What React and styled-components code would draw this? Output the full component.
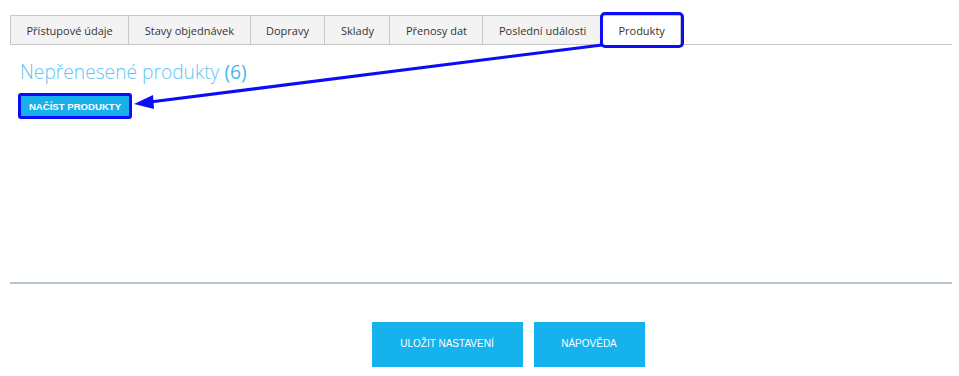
import React from 'react';
import styled, { createGlobalStyle } from 'styled-components';

const GlobalStyle = createGlobalStyle`
  html, body {
    margin: 0;
    padding: 0;
    background: #fff;
  }
  body {
    font-family: 'Open Sans', 'Liberation Sans', sans-serif;
  }
`;

const Page = styled.div`
  position: relative;
  width: 959px;
  height: 376px;
  padding: 15px 7px 0 10px;
  box-sizing: border-box;
`;

const TabBar = styled.div`
  display: flex;
  height: 30px;
  border-bottom: 1px solid #c8c8c8;
  box-sizing: border-box;
`;

const Tab = styled.div`
  display: flex;
  align-items: center;
  padding: 0 15.5px;
  height: 30px;
  box-sizing: border-box;
  border: 1px solid #c8c8c8;
  border-left-width: ${(p) => (p.$first ? '1px' : '0')};
  background: ${(p) => (p.$active ? '#fff' : '#f3f3f3')};
  border-bottom-color: ${(p) => (p.$active ? '#fff' : '#c8c8c8')};
  font-size: 11px;
  color: #333;
  white-space: nowrap;
  outline: ${(p) => (p.$active ? '3px solid #0c0cf6' : 'none')};
  outline-offset: 0;
  border-radius: ${(p) => (p.$active ? '2px' : '0')};
`;

const Panel = styled.div`
  height: 239px;
  padding: 15px 0 0 10px;
  box-sizing: border-box;
  border-bottom: 2px solid #b3c6d2;
`;

const Title = styled.h2`
  margin: 0;
  font-size: 19.2px;
  line-height: 24px;
  font-weight: 300;
  color: #62c4f1;
`;

const Count = styled.span`
  font-weight: 400;
  color: #45b8ee;
`;

const LoadButton = styled.button`
  margin-top: 9px;
  margin-left: -2px;
  display: block;
  width: 114px;
  height: 26px;
  padding: 0;
  border: 3px solid #0c0cf6;
  border-radius: 3px;
  background: #17b0ea;
  color: #fff;
  font-family: 'Liberation Sans', Arial, sans-serif;
  font-weight: 700;
  font-size: 9.6px;
  cursor: pointer;
`;

const Footer = styled.div`
  display: flex;
  justify-content: center;
  gap: 11px;
  padding: 38px 0 0 54px;
`;

const ActionButton = styled.button`
  width: ${(p) => p.$w}px;
  height: 45px;
  border: 0;
  padding: 0 0 2px;
  background: #15b2ee;
  color: #fff;
  font-family: 'Liberation Sans', Arial, sans-serif;
  font-size: 10px;
  cursor: pointer;
`;

const Annotation = styled.svg`
  position: absolute;
  left: 0;
  top: 0;
  pointer-events: none;
`;

const tabs = [
  'Přístupové údaje',
  'Stavy objednávek',
  'Dopravy',
  'Sklady',
  'Přenosy dat',
  'Poslední události',
  'Produkty',
];

export default function App() {
  return (
    <Page>
      <GlobalStyle />
      <TabBar>
        {tabs.map((t, i) => (
          <Tab key={t} $first={i === 0} $active={t === 'Produkty'}>
            {t}
          </Tab>
        ))}
      </TabBar>
      <Panel>
        <Title>
          Nepřenesené produkty <Count>(6)</Count>
        </Title>
        <LoadButton>NAČÍST PRODUKTY</LoadButton>
      </Panel>
      <Footer>
        <ActionButton $w={151}>ULOŽIT NASTAVENÍ</ActionButton>
        <ActionButton $w={111}>NÁPOVĚDA</ActionButton>
      </Footer>
      <Annotation width="959" height="376" viewBox="0 0 959 376">
        <line x1="602" y1="45" x2="150" y2="102" stroke="#0c0cf6" strokeWidth="3" />
        <polygon points="134,104 153,95 154,109" fill="#0c0cf6" />
      </Annotation>
    </Page>
  );
}
